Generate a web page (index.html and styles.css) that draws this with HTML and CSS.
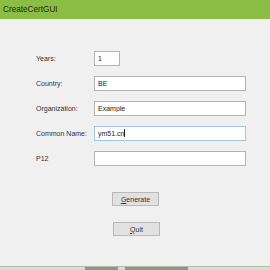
FILE: index.html
```html
<!DOCTYPE html>
<html lang="en">
<head>
    <meta charset="UTF-8">
    <meta name="viewport" content="width=device-width, initial-scale=1.0">
    <title>CreateCertGUI</title>
    <link rel="stylesheet" href="styles.css">
</head>
<body>

    <div class="window">
        <!-- Title bar -->
        <div class="title-bar">CreateCertGUI</div>

        <!-- Certificate form -->
        <div class="form">
            <div class="row">
                <label for="years">Years:</label>
                <input type="text" id="years" class="short" value="1">
            </div>
            <div class="row">
                <label for="country">Country:</label>
                <input type="text" id="country" value="BE">
            </div>
            <div class="row">
                <label for="org">Organization:</label>
                <input type="text" id="org" value="Example">
            </div>
            <div class="row">
                <label for="cn">Common Name:</label>
                <div class="field focused">ym51.cn<span class="caret"></span></div>
            </div>
            <div class="row">
                <label for="p12">P12</label>
                <input type="text" id="p12" value="">
            </div>

            <div class="buttons">
                <button class="btn"><u>G</u>enerate</button>
                <button class="btn quit"><u>Q</u>uit</button>
            </div>
        </div>

        <div class="taskbar"></div>
    </div>

</body>
</html>
```

FILE: styles.css
```css
body {
    margin: 0;
    padding: 0;
    background-color: #f0f0f0;
    font-family: "Liberation Sans", Arial, sans-serif;
}
.window {
    width: 270px;
    height: 270px;
    display: flex;
    flex-direction: column;
    overflow: hidden;
}
.title-bar {
    height: 19px;
    background-color: #8cbd45;
    color: #1e2a10;
    font-size: 8.2px;
    line-height: 20px;
    padding-left: 3px;
}
.form {
    flex: 1;
    padding-top: 32px;
    display: flex;
    flex-direction: column;
    gap: 10px;
}
.row {
    display: flex;
    align-items: center;
    height: 15px;
}
label {
    width: 58px;
    margin-left: 36px;
    font-size: 7px;
    color: #333;
}
input, .field {
    box-sizing: border-box;
    width: 152px;
    height: 15px;
    margin: 0;
    padding: 0 3px;
    border: 1px solid #b4b4b4;
    background-color: #fff;
    font-family: "Liberation Sans", Arial, sans-serif;
    font-size: 7px;
    color: #222;
    line-height: 13px;
    outline: none;
}
input.short {
    width: 26px;
}
.field.focused {
    border-color: #a3c6e6;
}
.caret {
    display: inline-block;
    width: 1px;
    height: 8px;
    background-color: #222;
    vertical-align: -1px;
}
.buttons {
    display: flex;
    flex-direction: column;
    align-items: flex-start;
    gap: 16px;
    margin-top: 16px;
    padding-left: 112px;
}
.btn {
    box-sizing: border-box;
    width: 47px;
    height: 14px;
    padding: 0;
    border: 1px solid #b9b9b9;
    background-color: #e1e1e1;
    font-family: "Liberation Sans", Arial, sans-serif;
    font-size: 7px;
    color: #333;
    cursor: pointer;
}
.btn.quit {
    margin-left: 1px;
}
.taskbar {
    height: 3px;
    border-top: 1px solid #b4bca8;
    background: linear-gradient(to right, #d8dfd0 0, #d8dfd0 85px, #8e9784 85px, #8e9784 118px, #d8dfd0 118px, #d8dfd0 125px, #8e9784 125px, #8e9784 188px, #d8dfd0 188px);
}
```
